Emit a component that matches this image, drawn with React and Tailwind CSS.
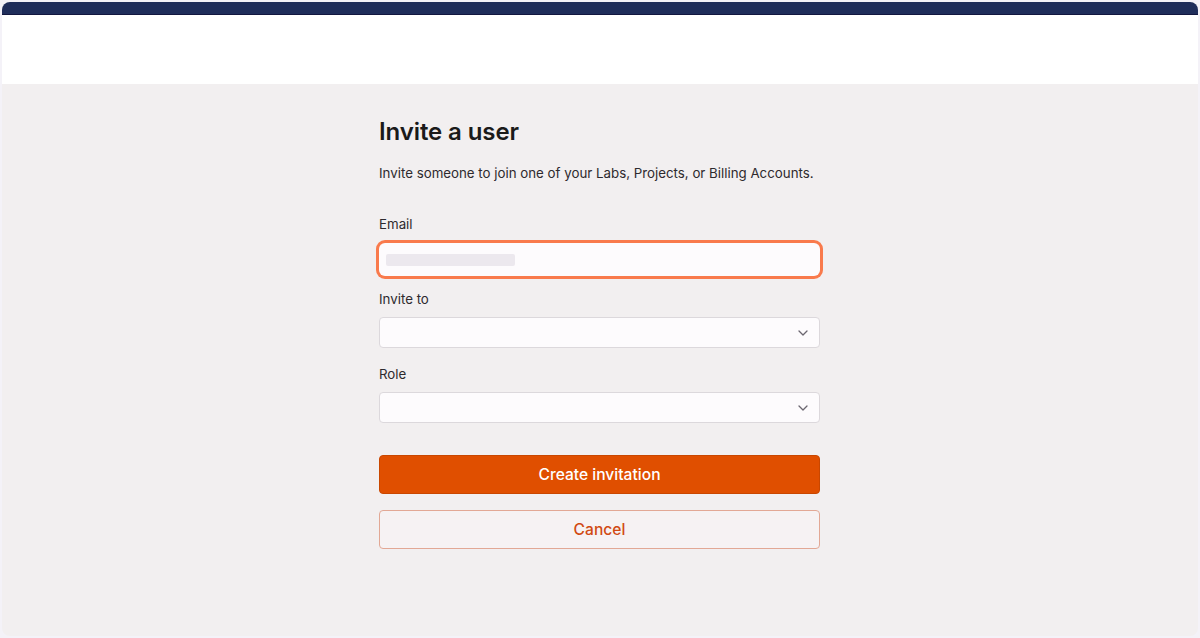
import React from "react";

function Chevron() {
  return (
    <svg width="10" height="6" viewBox="0 0 10 6" fill="none" className="text-[#6b6670]">
      <path d="M1 1l4 4 4-4" stroke="currentColor" strokeWidth="1.3" strokeLinecap="round" strokeLinejoin="round" />
    </svg>
  );
}

function Select() {
  return (
    <div className="h-[31px] w-full rounded-[4px] border border-[#dcd8dc] bg-[#fdfbfd] flex items-center justify-end pr-[11px]">
      <Chevron />
    </div>
  );
}

export default function App() {
  return (
    <div className="w-[1200px] h-[638px] bg-[#f4f2f8] p-[2px] overflow-hidden" style={{ fontFamily: "Inter, 'Noto Sans', sans-serif" }}>
      <div className="h-full w-full rounded-[8px] overflow-hidden flex flex-col bg-[#f2eff0]">
        <div className="h-[13px] bg-[#1f2d5a] border-b border-[#12163f] shrink-0" />
        <div className="h-[69px] bg-white shrink-0" />
        <div className="flex-1 flex justify-center">
          <div className="w-[441px] pt-[34px] ml-[-1px]">
            <h1 className="text-[24px] leading-[28px] font-semibold text-[#1a1a1a] tracking-[-0.1px]">Invite a user</h1>
            <p className="mt-[19px] text-[13.3px] leading-[16px] text-[#2e2a2e]">Invite someone to join one of your Labs, Projects, or Billing Accounts.</p>
            <div className="mt-[35px] text-[13.3px] leading-[16px] text-[#2e2a2e]">Email</div>
            <div className="mt-[11px] h-[33px] rounded-[6px] ring-[3px] ring-[#f97a4c] bg-[#fdfbfd] flex items-center pl-[7px]">
              <span className="h-[12px] w-[129px] bg-[#ece8ee] rounded-[2px]" />
            </div>
            <div className="mt-[15px] text-[13.3px] leading-[16px] text-[#2e2a2e]">Invite to</div>
            <div className="mt-[10px]"><Select /></div>
            <div className="mt-[18px] text-[13.3px] leading-[16px] text-[#2e2a2e]">Role</div>
            <div className="mt-[10px]"><Select /></div>
            <button className="mt-[32px] w-full h-[39px] rounded-[4px] bg-[#e04f00] border border-[#c94700] text-white text-[15.6px] font-medium">Create invitation</button>
            <button className="mt-[16px] w-full h-[39px] rounded-[4px] bg-[#f6f2f3] border border-[#e2a895] text-[#d14a12] text-[15.6px] font-medium">Cancel</button>
          </div>
        </div>
      </div>
    </div>
  );
}
